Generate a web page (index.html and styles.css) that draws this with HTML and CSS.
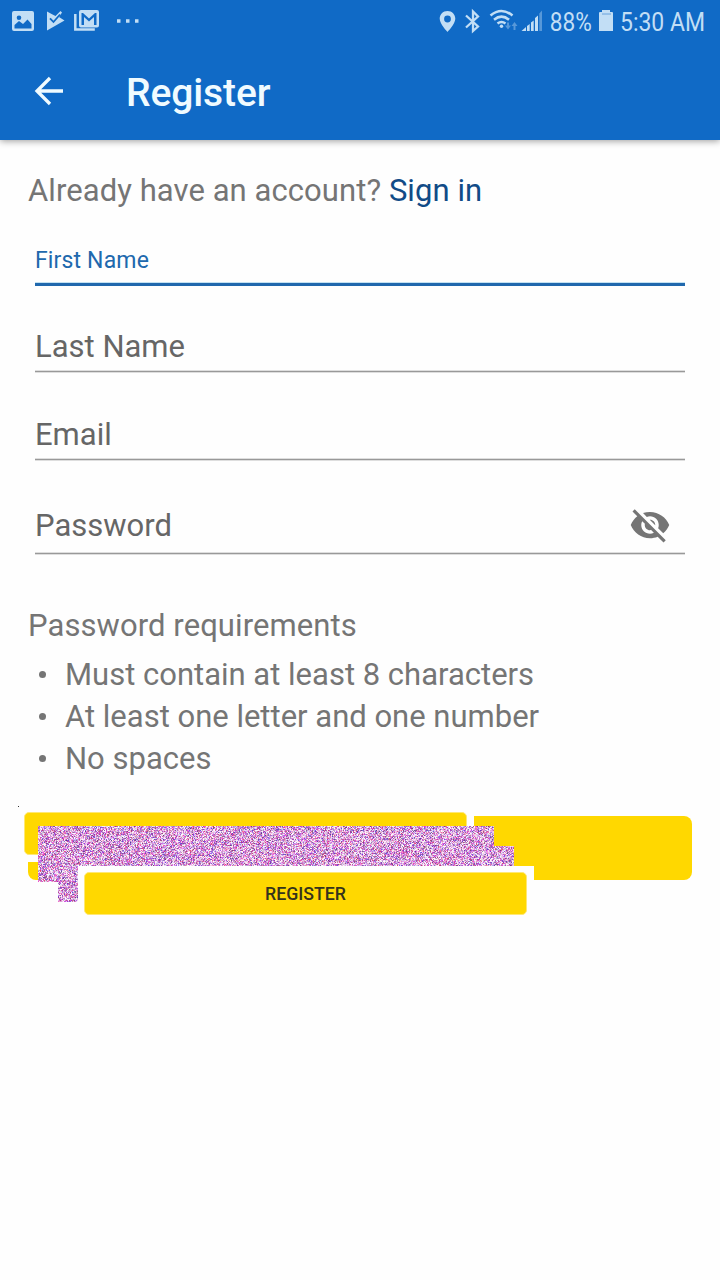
FILE: index.html
```html
<!DOCTYPE html>
<html lang="en">
<head>
<meta charset="utf-8">
<title>Register</title>
<link rel="stylesheet" href="styles.css">
</head>
<body>
<header class="header">
  <div class="status">
    <svg class="status-icons" width="150" height="44" viewBox="0 0 150 44">
      <path fill-rule="evenodd" d="M14 11h18q2 0 2 2v16q0 2-2 2H14q-2 0-2-2V13q0-2 2-2zm.5 14v3.500h17V24l-4-4.500-4.500 4.500-4-3zM19 15.500a2.300 2.300 0 1 0 0 4.600 2.300 2.300 0 0 0 0-4.600z"/>
      <path d="M47 11.500l6 3.200 2.500 1.300 5-5 1.500 1.500-3 4.500 5.500 3.500L47 30.500z"/>
      <path d="M50 18.300l3.500 3.700 6.500-7.500" fill="none" stroke="#106ac6" stroke-width="1.800"/>
      <path fill-rule="evenodd" d="M81 10h16q2 0 2 2v13.500q0 2-2 2H81q-2 0-2-2V12q0-2 2-2zm.5 3v12h2.500v-8l5 4.500 5-4.500v8h2.500V13H95l-6 5.500L83 13z"/>
      <path d="M75.300 14v15.500h19.500" fill="none" stroke="#c2def5" stroke-width="2.500"/>
      <path d="M117 19.300h3.500v3.500H117zm9 0h3.500v3.500H126zm9 0h3.500v3.500H135z"/>
    </svg>
    <svg class="status-icons" width="290" height="44" viewBox="430 0 290 44">
      <path fill-rule="evenodd" d="M447.500 11c-4.600 0-7.800 3.400-7.800 7.800 0 5.200 7.800 13.200 7.800 13.200s7.800-8 7.800-13.200c0-4.400-3.200-7.800-7.800-7.800zm0 4.600a3.400 3.400 0 1 1 0 6.800 3.400 3.400 0 0 1 0-6.800z"/>
      <path class="line" stroke-width="2.300" d="M466 15.500l12 11-5 4.500V11.500l5 5-12 11"/>
      <path class="line" stroke-width="2.600" d="M490.500 15.500q11-9 22 0M494 19.700q7.500-6 15 0M497.500 23.500q4-3 8 0"/>
      <circle cx="501.500" cy="26.200" r="1.700"/>
      <path class="dim" d="M505 25.500h2v-3h2v3h2l-3 4zM511.500 26l3-4 3 4h-2v4h-2v-4z"/>
      <path d="M521.500 31l4.500-4v4zM527 26l2.700-2v7H527zM531 22.500l2.700-2V31H531zM535 18l3-2.500V31h-3z"/>
      <path class="dim" d="M539.300 13.500l2.700-3V31h-2.700z"/>
      <text x="549.800" y="31" textLength="42" lengthAdjust="spacingAndGlyphs">88%</text>
      <path d="M602 10h8v2h2q1 0 1 1v18h-14V13q0-1 1-1h2z"/><path d="M602 14h9" stroke="#106ac6" opacity=".5"/>
      <text x="620" y="31" textLength="85" lengthAdjust="spacingAndGlyphs">5:30 AM</text>
    </svg>
  </div>
  <div class="toolbar">
    <svg class="back" width="30" height="30" viewBox="0 0 30 30"><path d="M29 15H3M16 2L3 15l13 13" fill="none" stroke="#f0fbff" stroke-width="3.300"/></svg>
    <h1 class="title">Register</h1>
  </div>
</header>
<main class="form">
  <p class="account">Already have an account? <a class="signin">Sign in</a></p>
  <div class="field field-first"><label>First Name</label></div>
  <div class="field field-last"><label>Last Name</label></div>
  <div class="field field-email"><label>Email</label></div>
  <div class="field field-password"><label>Password</label>
    <svg class="eye" width="42" height="42" viewBox="0 0 24 24"><path d="M12 7c2.760 0 5 2.240 5 5 0 .65-.13 1.260-.36 1.830l2.920 2.920c1.510-1.260 2.700-2.890 3.430-4.750-1.730-4.390-6-7.500-11-7.500-1.400 0-2.740.25-3.980.7l2.160 2.160C10.740 7.130 11.350 7 12 7zM2 4.270l2.280 2.280.46.46C3.080 8.300 1.780 10.020 1 12c1.730 4.390 6 7.500 11 7.500 1.550 0 3.030-.3 4.380-.84l.42.42L19.730 22 21 20.730 3.270 3 2 4.270zM7.530 9.800l1.550 1.550c-.05.21-.08.43-.08.65 0 1.660 1.340 3 3 3 .22 0 .44-.03.65-.08l1.550 1.550c-.67.33-1.410.53-2.200.53-2.760 0-5-2.240-5-5 0-.79.2-1.530.53-2.200zm4.310-.78l3.150 3.150.02-.16c0-1.660-1.340-3-3-3l-.17.01z"/></svg>
  </div>
  <h2 class="requirements-title">Password requirements</h2>
  <ul class="requirements">
    <li>Must contain at least 8 characters</li>
    <li>At least one letter and one number</li>
    <li>No spaces</li>
  </ul>
  <div class="actions">
    <div class="bar"></div>
    <div class="panel panel-back"><div class="button"></div></div>
    <canvas class="noise" width="476" height="76"></canvas>
    <div class="panel panel-front"><button class="button">REGISTER</button></div>
    <i class="speck"></i>
  </div>
</main>
<script src="noise.js"></script>
</body>
</html>
```
FILE: styles.css
```css
* { box-sizing: border-box; }
body { margin: 0; min-height: 1280px; background: #fefefe; font-family: Roboto, sans-serif; color: #757575; }
.header { height: 140px; background: #106ac6; box-shadow: 0 1px 7px rgba(0, 0, 0, .4); }
.status { height: 44px; display: flex; justify-content: space-between; }
.status-icons { display: block; fill: #c2def5; font-size: 26px; }
.status-icons .line { fill: none; stroke: #c2def5; }
.status-icons .dim { opacity: .4; }
.toolbar { height: 96px; display: flex; align-items: center; padding-left: 34px; }
.back { margin-top: -2px; }
.title { margin: 2px 0 0 62px; font-size: 39px; line-height: 48px; font-weight: 500; letter-spacing: -.1px; color: #f0fbff; }
.form { padding: 30px 28px 0; font-size: 31px; }
.account { margin: 0; height: 42px; line-height: 42px; letter-spacing: .07px; white-space: nowrap; }
.signin { color: #114b87; }
.field { margin: 0 7px; display: flex; justify-content: space-between; align-items: flex-end; color: #666; border-bottom: 1px solid #999; box-shadow: 0 1px #dedede, inset 0 -1px #dedede; }
.field label { line-height: 36px; }
.field-first { height: 74px; border-bottom: 3px solid #2068ad; box-shadow: inset 0 -1px #c3e2f2; color: #2068ad; font-size: 23px; letter-spacing: .15px; padding-bottom: 4px; }
.field-last { height: 86px; padding-bottom: 6px; }
.field-email { height: 88px; padding-bottom: 6px; }
.field-password { height: 94px; padding-bottom: 9px; }
.eye { margin: 0 14px -2px 0; fill: #757575; }
.requirements-title { margin: 51px 0 7px; font-size: 31px; line-height: 42px; font-weight: 400; letter-spacing: .08px; }
.requirements { margin: 0; padding: 0; list-style: none; }
.requirements li { display: flex; align-items: center; height: 42px; line-height: 42px; padding-left: 11px; }
.requirements li::before { content: ""; width: 7px; height: 7px; margin: -2px 19px 0 0; border-radius: 50%; background: #757575; }
.actions { position: relative; margin-top: 36px; height: 64px; }
.bar { height: 64px; border-radius: 8px; background: #ffd800; }
.panel { position: absolute; width: 456px; height: 56px; padding: 6px 7px 7px 6px; background: #fefefe; }
.panel-back { left: -10px; top: -10px; }
.panel-front { left: 50px; top: 50px; }
.button { display: block; width: 100%; height: 100%; padding: 2px 0 0; border: 1px solid #ffe873; border-radius: 5px; background: #ffd800; color: #35331c; font: 500 17.700px/39px Roboto, sans-serif; }
.noise { position: absolute; left: 10px; top: 10px; clip-path: polygon(0 0, 456px 0, 456px 20px, 476px 20px, 476px 40px, 40px 40px, 40px 76px, 20px 76px, 20px 56px, 0 56px); }
.speck { position: absolute; left: -10px; top: -10px; width: 1px; height: 1px; background: #333; }
```
FILE: noise.js
```js
const canvas = document.querySelector('.noise');
const context = canvas.getContext('2d');
const image = context.createImageData(canvas.width, canvas.height);
let seed = 73;
function random() {
  seed = (Math.imul(seed, 1664525) + 1013904223) >>> 0;
  return seed / 4294967296;
}
for (let i = 0; i < image.data.length; i += 4) {
  const green = 60 + random() * 195;
  image.data[i] = green + (255 - green) * (0.15 + random() * 0.8);
  image.data[i + 1] = green;
  image.data[i + 2] = green + (255 - green) * (0.25 + random() * 0.65);
  image.data[i + 3] = 255;
}
context.putImageData(image, 0, 0);
```
